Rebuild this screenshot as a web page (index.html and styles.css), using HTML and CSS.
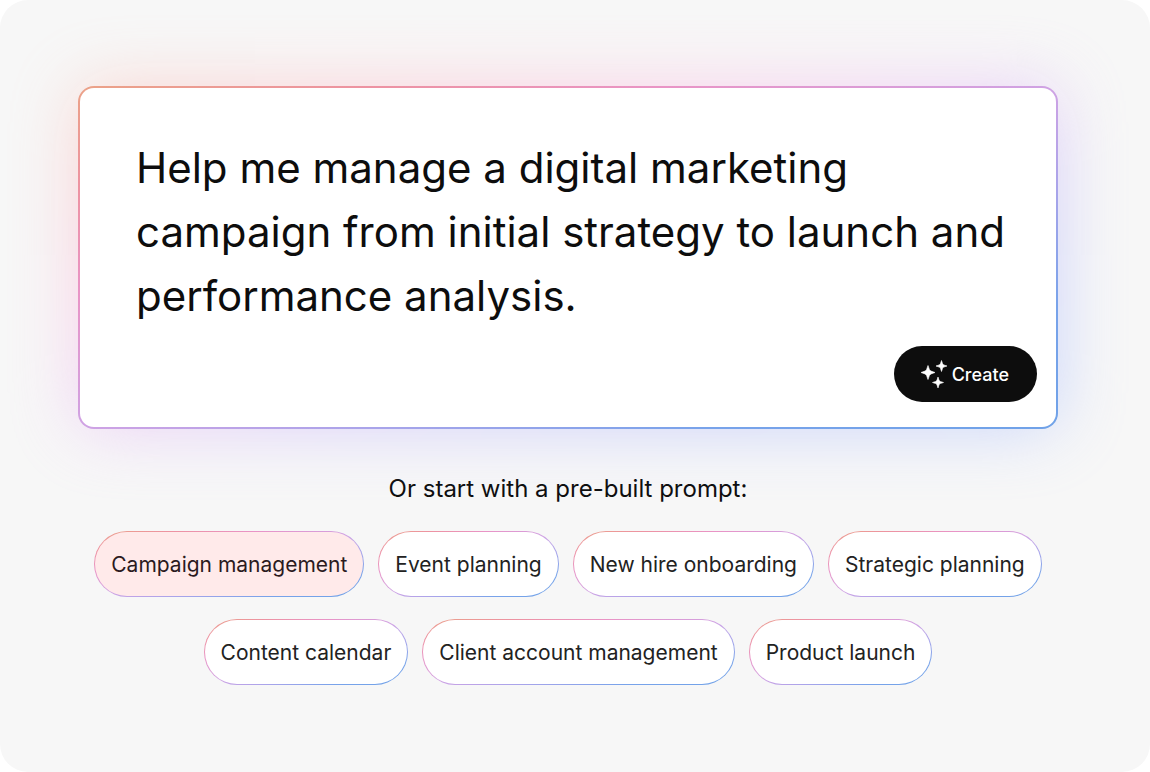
FILE: index.html
```
<!doctype html>
<html lang="en">
<head>
    <meta charset="UTF-8">
    <meta name="viewport" content="width=device-width, initial-scale=1.0">
    <title>Create a project</title>
    <link rel="stylesheet" href="styles.css">
</head>
<body>
<main class="page">
    <form class="prompt">
        <div class="prompt-card">
            <textarea class="prompt-text" rows="3" aria-label="Describe your project" spellcheck="false">Help me manage a digital marketing campaign from initial strategy to launch and performance analysis.</textarea>
            <button class="create" type="submit">
                <svg class="sparkles" viewBox="0 0 28 28" aria-hidden="true">
                    <path d="M8 5.5L9.4 9.4Q9.9 10.6 11.1 11.1L15 12.5L11.1 13.9Q9.9 14.4 9.4 15.6L8 19.5L6.6 15.6Q6.1 14.4 4.9 13.9L1 12.5L4.9 11.1Q6.1 10.6 6.6 9.4Z"/>
                    <path d="M21.5 0.5L22.5 3.6Q22.8 4.5 23.8 4.9L27 6L23.8 7.1Q22.8 7.5 22.5 8.4L21.5 11.5L20.5 8.4Q20.2 7.5 19.2 7.1L16 6L19.2 4.9Q20.2 4.5 20.5 3.6Z"/>
                    <path d="M18 17L19 20.1Q19.3 21 20.3 21.4L23.5 22.5L20.3 23.6Q19.3 24 19 24.9L18 28L17 24.9Q16.7 24 15.7 23.6L12.5 22.5L15.7 21.4Q16.7 21 17 20.1Z"/>
                </svg>
                Create
            </button>
        </div>
    </form>

    <h2 class="subtitle">Or start with a pre-built prompt:</h2>

    <div class="chips">
        <button class="chip selected" type="button">Campaign management</button>
        <button class="chip" type="button">Event planning</button>
        <button class="chip" type="button">New hire onboarding</button>
        <button class="chip" type="button">Strategic planning</button>
        <button class="chip" type="button">Content calendar</button>
        <button class="chip" type="button">Client account management</button>
        <button class="chip" type="button">Product launch</button>
    </div>
</main>
</body>
</html>
```
FILE: styles.css
```
:root {
    --rainbow: linear-gradient(to bottom right, #eba287 0%, #ed93a2 15%, #e994c6 30%, #cfa2e4 50%, #a9a4ea 65%, #78a3ea 82%, #70a2e8 100%);
}

* {
    box-sizing: border-box;
}

body {
    margin: 0;
    background: #fff;
    font-family: Inter, "Liberation Sans", sans-serif;
    color: #0d0d0d;
}

button,
textarea {
    font: inherit;
    color: inherit;
}

.page {
    min-height: 100vh;
    padding: 86px 92px 86px 78px;
    border-radius: 28px;
    background: #f7f7f7;
    overflow: hidden;
}

.prompt {
    position: relative;

    /* soft glow behind the card */
    &::before {
        content: "";
        position: absolute;
        inset: 0;
        border-radius: 16px;
        background: linear-gradient(to bottom right, #ffb8a4 0%, #ffa6b8 20%, #fca6d8 34%, #e4a8f4 48%, #b5a6ff 60%, #98aaff 80%, #98b4ff 100%);
        filter: blur(34px);
        opacity: 0.46;
    }
}

.prompt-card {
    position: relative;
    display: flex;
    flex-direction: column;
    padding: 48px 19px 25px 56px;
    border: 2px solid transparent;
    border-radius: 16px;
    background: linear-gradient(#fff, #fff) padding-box, var(--rainbow) border-box;
}

.prompt-text {
    display: block;
    width: 100%;
    height: 192px;
    padding: 0;
    border: 0;
    outline: 0;
    resize: none;
    overflow: hidden;
    background: none;
    font-size: 42px;
    line-height: 64px;
}

.create {
    display: flex;
    align-items: center;
    gap: 4px;
    align-self: flex-end;
    height: 56px;
    margin-top: 18px;
    padding: 0 28px 0 26px;
    border: 0;
    border-radius: 28px;
    background: #0d0d0d;
    color: #fff;
    font-size: 18px;
    font-weight: 500;
}

.sparkles {
    width: 28px;
    height: 28px;
    fill: #fff;
    stroke: #fff;
    stroke-width: 0.6;
    stroke-linejoin: round;
}

.subtitle {
    margin: 44px 0 26px;
    font-size: 24px;
    font-weight: 400;
    line-height: 32px;
    text-align: center;
}

.chips {
    display: flex;
    flex-wrap: wrap;
    justify-content: center;
    gap: 22px 14px;
}

.chip {
    height: 66px;
    padding: 0 16px;
    border: 1px solid transparent;
    border-radius: 33px;
    background: linear-gradient(#fff, #fff) padding-box, var(--rainbow) border-box;
    color: #222;
    font-size: 21px;
    white-space: nowrap;

    &.selected {
        background: linear-gradient(#ffeaea, #ffeaea) padding-box, var(--rainbow) border-box;
        color: #2b1a1e;
    }
}
```
